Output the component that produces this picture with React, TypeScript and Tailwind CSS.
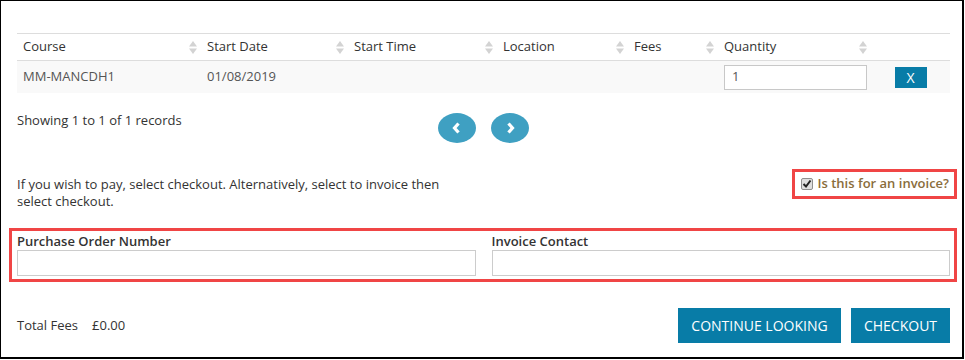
const columns = [
  { label: 'Course', w: 'w-[184px]', sort: true },
  { label: 'Start Date', w: 'w-[147px]', sort: true },
  { label: 'Start Time', w: 'w-[149px]', sort: true },
  { label: 'Location', w: 'w-[131px]', sort: true },
  { label: 'Fees', w: 'w-[90px]', sort: true },
  { label: 'Quantity', w: 'w-[153px]', sort: true },
  { label: '', w: 'flex-1', sort: false },
]

function SortIcon() {
  return (
    <svg width="8" height="15" viewBox="0 0 8 15" className="shrink-0">
      <path d="M0 6.5 L4 1 L8 6.5 Z" fill="#d3d3d3" />
      <path d="M0 8.5 L4 14 L8 8.5 Z" fill="#d3d3d3" />
    </svg>
  )
}

function PageButton({ dir }: { dir: 'left' | 'right' }) {
  return (
    <div className="w-[38px] h-[30px] rounded-[50%] bg-[#3fa0c2] flex items-center justify-center">
      <svg width="12" height="14" viewBox="0 0 12 14">
        {dir === 'left' ? (
          <polyline points="7.5,2.5 3.5,7 7.5,11.5" fill="none" stroke="#fff" strokeWidth="3.2" strokeLinejoin="miter" />
        ) : (
          <polyline points="4.5,2.5 8.5,7 4.5,11.5" fill="none" stroke="#fff" strokeWidth="3.2" strokeLinejoin="miter" />
        )}
      </svg>
    </div>
  )
}

function CheckoutPanel() {
  return (
    <div className="w-[964px] h-[359px] border-l border-t border-r-2 border-b-2 border-black bg-white pl-[16px] pr-[12px] text-[13px] text-[#333] font-['Open_Sans',sans-serif]">

      {/* basket table */}
      <div className="mt-[32px] border-t border-[#dddddd]">
        <div className="flex h-[27px] border-b border-[#dddddd]">
          {columns.map((c, i) => (
            <div key={i} className={`${c.w} h-full flex items-center justify-between pl-[6px] pr-[4px]`}>
              <span>{c.label}</span>
              {c.sort && <SortIcon />}
            </div>
          ))}
        </div>
        <div className="flex h-[32px] bg-[#f9f9f9] text-[#555]">
          <div className="w-[184px] flex items-center pl-[6px]">MM-MANCDH1</div>
          <div className="w-[147px] flex items-center pl-[6px]">01/08/2019</div>
          <div className="w-[149px]"></div>
          <div className="w-[131px]"></div>
          <div className="w-[90px]"></div>
          <div className="w-[153px] flex items-center pl-[6px]">
            <div className="w-[143px] h-[25px] border border-[#c8c8c8] bg-white flex items-center pl-[7px] text-[#555]">1</div>
          </div>
          <div className="flex-1 flex items-center justify-center">
            <div className="w-[32px] h-[21px] bg-[#087ca7] text-white flex items-center justify-center text-[14px]">X</div>
          </div>
        </div>
      </div>

      {/* paging */}
      <div className="mt-[20px] h-[30px] grid grid-cols-[1fr_auto_1fr] items-start">
        <div className="-mt-[2px] leading-[18px]">Showing 1 to 1 of 1 records</div>
        <div className="flex gap-[15px]">
          <PageButton dir="left" />
          <PageButton dir="right" />
        </div>
        <div></div>
      </div>

      {/* invoice choice */}
      <div className="mt-[26px] h-[30px] flex justify-between items-start">
        <p className="mt-[7px] w-[430px] leading-[17px]">
          If you wish to pay, select checkout. Alternatively, select to invoice then select checkout.
        </p>
        <div className="-mr-[7px] h-[30px] border-[3px] border-[#f04545] flex items-center pl-[6px] pr-[5px] gap-[5px]">
          <span className="w-[12px] h-[12px] border border-[#8f8f8f] rounded-[2px] bg-[#dedede] flex items-center justify-center">
            <svg width="10" height="10" viewBox="0 0 10 10">
              <polyline points="1.5,5 4,7.5 8.5,1.5" fill="none" stroke="#222" strokeWidth="2" />
            </svg>
          </span>
          <span className="font-semibold text-[#8a6d3b]">Is this for an invoice?</span>
        </div>
      </div>

      {/* invoice fields */}
      <div className="mt-[29px] -ml-[8px] -mr-[7px] border-[3px] border-[#f04545] pl-[5px] pr-[4px] pt-[1px] pb-[3px] grid grid-cols-2 gap-x-[16px]">
        <div>
          <div className="font-semibold leading-[18px]">Purchase Order Number</div>
          <div className="h-[26px] border border-[#cccccc] bg-white"></div>
        </div>
        <div>
          <div className="font-semibold leading-[18px]">Invoice Contact</div>
          <div className="h-[26px] border border-[#cccccc] bg-white"></div>
        </div>
      </div>

      {/* totals + actions */}
      <div className="mt-[26px] h-[35px] flex justify-between items-center">
        <div className="flex gap-[14px]">
          <span>Total Fees</span>
          <span>£0.00</span>
        </div>
        <div className="flex gap-[10px] text-[14px] text-white">
          <div className="w-[163px] h-[35px] bg-[#087ca7] flex items-center justify-center">CONTINUE LOOKING</div>
          <div className="w-[99px] h-[35px] bg-[#087ca7] flex items-center justify-center">CHECKOUT</div>
        </div>
      </div>

    </div>
  )
}

export default function App() {
  return (
    <div className="w-[965px] h-[360px] bg-white">
      <CheckoutPanel />
    </div>
  )
}
